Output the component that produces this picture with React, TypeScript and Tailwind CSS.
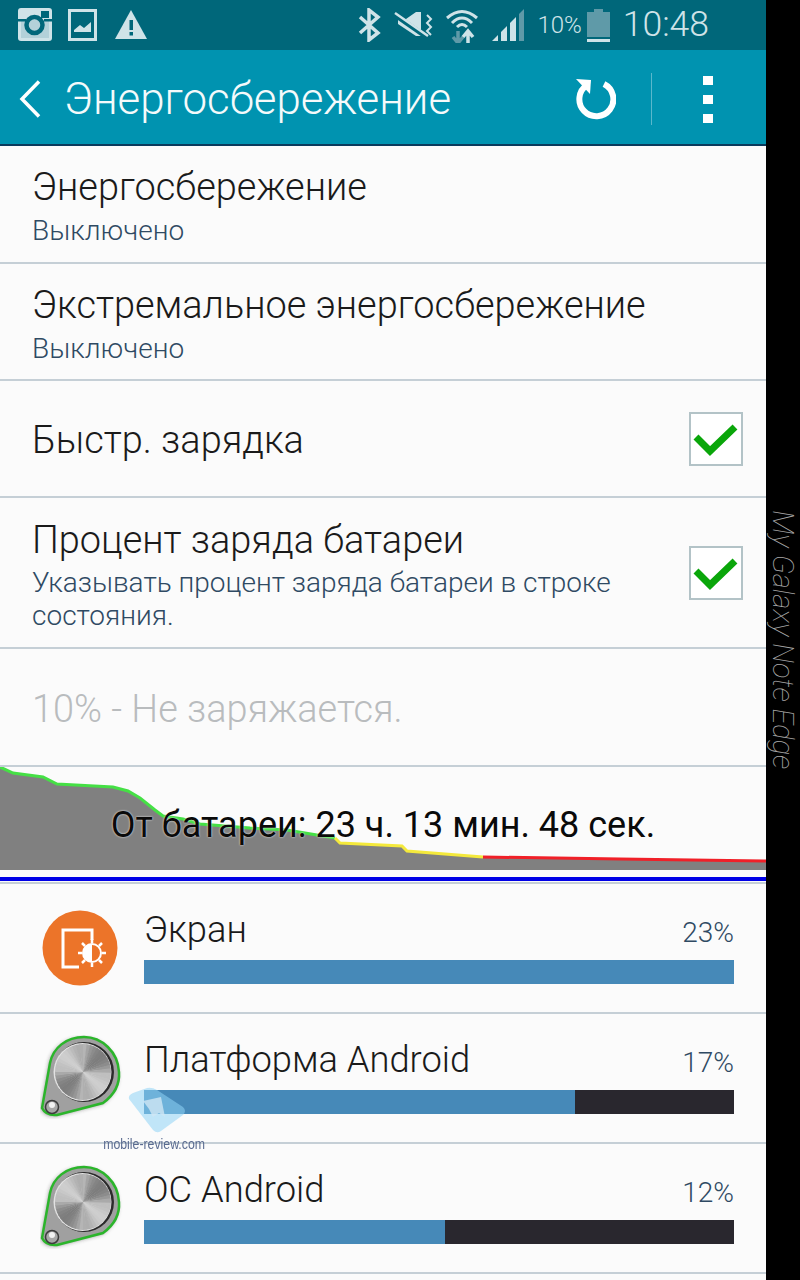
import React from "react";

const font = { fontFamily: "Roboto, sans-serif" };

function StatusBar() {
  const c = "#cfe3e8";
  return (
    <div className="h-[50px] bg-[#00677a] flex items-center relative">
      <svg className="ml-[18px]" width="34" height="34" viewBox="0 0 34 34">
        <rect x="0" y="0" width="34" height="33" rx="3" fill={c} />
        <rect x="3" y="12" width="28" height="18" fill="#7fb0bc" opacity="0.35" />
        <circle cx="16.5" cy="17" r="8" fill="none" stroke="#00677a" strokeWidth="4.5" />
        <rect x="23" y="3" width="8" height="7" fill="#00677a" />
        <rect x="0" y="11" width="8" height="2.5" fill="#00677a" />
        <rect x="26" y="11" width="8" height="2.5" fill="#00677a" />
      </svg>
      <svg className="ml-[16px]" width="29" height="32" viewBox="0 0 29 32">
        <rect x="1.5" y="1.5" width="26" height="29" fill="none" stroke={c} strokeWidth="3" />
        <path d="M6 23 L6 21 L12 16 L16 19 L23 13 L23 23 Z" fill={c} />
      </svg>
      <svg className="ml-[18px]" width="32" height="30" viewBox="0 0 32 30">
        <path d="M16 0 L32 29 L0 29 Z" fill={c} />
        <rect x="14.5" y="10" width="3.5" height="10" fill="#00677a" />
        <rect x="14.5" y="22" width="3.5" height="3.5" fill="#00677a" />
      </svg>
      <div className="ml-auto mr-[57px] flex items-center">
        <svg width="24" height="34" viewBox="0 0 24 34" fill="none" stroke={c} strokeWidth="3.5">
          <path d="M2 9 L20 25 L11 32 L11 2 L20 9 L2 25" />
        </svg>
        <svg className="ml-[9px]" width="44" height="30" viewBox="0 0 44 30">
          <path d="M7 9 L15 9 L25 2 L30 2 L30 26 L25 26 L7 14 Z" fill={c} />
          <path d="M4 5 L37 28" stroke="#00677a" strokeWidth="5" />
          <path d="M4 3 L37 26" stroke={c} strokeWidth="2.5" />
          <path d="M36 5 L40 9 L36 13 L40 17 L36 21 L40 25" stroke={c} strokeWidth="2" fill="none" />
        </svg>
        <svg className="ml-[10px]" width="34" height="36" viewBox="0 0 34 36" fill="none">
          <path d="M2 11 Q17 -2 32 11" stroke={c} strokeWidth="3" />
          <path d="M7 16 Q17 6 27 16" stroke={c} strokeWidth="3" />
          <path d="M12 20 Q17 15 22 20" stroke={c} strokeWidth="3" />
          <path d="M13 24 L13 36 M8 30 L13 36 L18 30" stroke="#5f9aa8" strokeWidth="3.5" />
          <path d="M23 36 L23 24 M18 30 L23 24 L28 30" stroke={c} strokeWidth="3.5" />
        </svg>
        <svg className="ml-[13px]" width="33" height="33" viewBox="0 0 33 33">
          <path d="M0 32 L6 26 L6 32 Z" fill={c} />
          <path d="M9 32 L9 23 L15 17 L15 32 Z" fill={c} />
          <path d="M18 32 L18 14 L24 8 L24 32 Z" fill={c} />
          <path d="M27 32 L27 5 L32 0 L32 32 Z" fill="#5f9aa8" />
        </svg>
        <span className="ml-[12px] text-[24px] leading-none text-[#cfe3e8] font-light" style={font}>10%</span>
        <svg className="ml-[5px]" width="23" height="33" viewBox="0 0 23 33">
          <path d="M7 0 L16 0 L16 3 L23 3 L23 28 L0 28 L0 3 L7 3 Z" fill="#5f9aa8" />
          <rect x="0" y="30" width="23" height="3" fill={c} />
        </svg>
        <span className="ml-[13px] text-[35.5px] leading-none text-[#cfe3e8] font-light" style={font}>10:48</span>
      </div>
    </div>
  );
}

function ActionBar() {
  return (
    <div className="h-[96px] bg-[#0093b0] border-b-2 border-[#0a3a5c] flex items-center text-white pt-[4px]">
      <svg className="ml-[19px]" width="22" height="38" viewBox="0 0 22 38" fill="none" stroke="#fff" strokeWidth="3.5">
        <path d="M20 1.5 L3 19 L20 36.5" />
      </svg>
      <span className="ml-[23px] text-[43.8px] leading-none font-light text-[#f4fafb] pt-[1px]" style={font}>Энергосбережение</span>
      <svg className="ml-[123px]" width="42" height="42" viewBox="0 0 42 42" fill="none">
        <path d="M13 7 A17 17 0 1 0 30 6" stroke="#fff" strokeWidth="6" fill="none" />
        <path d="M2 1 L17 2 L16 16 Z" fill="#fff" />
      </svg>
      <div className="ml-[35px] w-px h-[52px] bg-[#5ab8cc]" />
      <div className="ml-[51px] flex flex-col gap-[10px]">
        <div className="w-[10px] h-[9px] bg-white" />
        <div className="w-[10px] h-[9px] bg-white" />
        <div className="w-[10px] h-[9px] bg-white" />
      </div>
    </div>
  );
}

function Check() {
  return (
    <div className="w-[54px] h-[54px] border-2 border-[#b3c3c7] bg-white flex items-center justify-center shrink-0">
      <svg width="46" height="34" viewBox="0 0 46 34" fill="none" stroke="#0aa60a" strokeWidth="7">
        <path d="M3 15 L17 29 L42 5" />
      </svg>
    </div>
  );
}

function Row({ h, title, sub, check, dim, pt, subMt = "mt-[6px]" }: { h: string; title: string; sub?: React.ReactNode; check?: boolean; dim?: boolean; pt: string; subMt?: string }) {
  return (
    <div className={`${h} border-b-2 border-[#c5cfd6] flex items-center pl-[32px] pr-[23px]`}>
      <div className={`flex-1 min-w-0 self-start ${pt}`}>
        <div className={`text-[37.9px] leading-[40px] font-light ${dim ? "text-[#b9bcbe]" : "text-[#1a1a1a]"}`}>{title}</div>
        {sub && <div className={`text-[28px] leading-[33px] text-[#2f4a63] font-light ${subMt}`}>{sub}</div>}
      </div>
      {check && <Check />}
    </div>
  );
}

function Chart() {
  const green = "0,767 13,773 43,777 57,784 113,787 128,791 140,798 155,810 163,816 183,819 200,824 250,828 287,830 335,838";
  const yellow = "335,838 340,843 402,846 407,851 483,857";
  const red = "483,857 620,859 766,861";
  const area = `${green} 340,843 402,846 407,851 483,857 620,859 766,861 766,870 0,870`;
  return (
    <div className="relative h-[103px] bg-[#fbfbfb]">
      <svg className="absolute inset-0" width="766" height="103" viewBox="0 767 766 103">
        <polygon points={area} fill="#808080" />
        <polyline points={green} fill="none" stroke="#45e045" strokeWidth="3" />
        <polyline points={yellow} fill="none" stroke="#f4e93c" strokeWidth="3" />
        <polyline points={red} fill="none" stroke="#f02028" strokeWidth="3" />
      </svg>
      <div className="absolute left-0 right-0 top-[36px] text-center text-[36px] leading-[44px] text-[#0a0a0a] [text-shadow:0_0_2px_#fff]">
        От батареи: 23 ч. 13 мин. 48 сек.
      </div>
    </div>
  );
}

function Knob({ id }: { id: string }) {
  const wedges = [];
  for (let i = 0; i < 48; i++) {
    const a0 = (i / 48) * Math.PI * 2;
    const a1 = ((i + 1.2) / 48) * Math.PI * 2;
    const v = Math.round(175 + 80 * Math.pow(Math.abs(Math.cos(a0 - 0.7)), 6) - 50 * Math.abs(Math.sin(2 * a0)));
    wedges.push(
      <path
        key={i}
        d={`M43 37 L${43 + 28 * Math.cos(a0)} ${37 + 28 * Math.sin(a0)} L${43 + 28 * Math.cos(a1)} ${37 + 28 * Math.sin(a1)} Z`}
        fill={`rgb(${v},${v},${v})`}
      />
    );
  }
  const tear = "M44 2 C26 2 13 13 10 28 L2 73 Q6 81 17 80 L63 68 C74 60 80 50 79 37 C78 17 62 2 44 2 Z";
  return (
    <svg width="84" height="84" viewBox="0 0 84 84" className="shrink-0">
      <defs>
        <filter id={id + "s"}><feGaussianBlur stdDeviation="2" /></filter>
        <filter id={id + "b"}><feGaussianBlur stdDeviation="0.7" /></filter>
      </defs>
      <path d={tear} fill="#333" opacity="0.55" filter={`url(#${id}s)`} transform="translate(-1 1)" />
      <path d={tear} fill="#a0a0a0" stroke="#2bb52b" strokeWidth="2.5" />
      <circle cx="44" cy="37" r="30" fill="#2c2c2c" filter={`url(#${id}b)`} />
      <circle cx="42.5" cy="37" r="29" fill="#e2e2e2" />
      <g filter={`url(#${id}b)`}>{wedges}</g>
      <circle cx="12" cy="72" r="6.5" fill="#a8a8a8" stroke="#3c3c3c" strokeWidth="1.5" />
      <circle cx="12" cy="70" r="3" fill="#f2f2f2" />
    </svg>
  );
}

function ScreenIcon() {
  return (
    <svg width="76" height="76" viewBox="0 0 76 76" className="shrink-0">
      <circle cx="38" cy="38" r="37.5" fill="#ec7429" />
      <path d="M50 30 L50 20 L21 20 L21 57 L37 57" fill="none" stroke="#fff" strokeWidth="3" />
      <path d="M50 34 A9 9 0 0 0 50 52 Z" fill="#fff" />
      <circle cx="50" cy="43" r="9" fill="none" stroke="#fff" strokeWidth="2" />
      <path d="M50 29 V33 M50 53 V57 M36 43 H40 M60 43 H64 M40 33 L43 36 M60 33 L57 36 M40 53 L43 50 M60 53 L57 50" stroke="#fff" strokeWidth="2.5" />
    </svg>
  );
}

function Item({ name, pct, width, dark, icon, left }: { name: string; pct: string; width: number; dark?: boolean; icon: React.ReactNode; left: string }) {
  return (
    <div className="h-[130px] border-b-2 border-[#c5cfd6] flex pr-[32px]">
      <div className={`w-[144px] shrink-0 ${left}`}>{icon}</div>
      <div className="flex-1 min-w-0 pt-[23px]">
        <div className="flex items-end justify-between h-[44px]">
          <span className="text-[36.3px] leading-[42px] text-[#1a1a1a] font-light">{name}</span>
          <span className="text-[28px] leading-[36px] text-[#2f4a63] font-light">{pct}</span>
        </div>
        <div className={`mt-[9px] h-[24px] ${dark ? "bg-[#29272e]" : "bg-[#4689b8]"}`}>
          <div className="h-full bg-[#4689b8]" style={{ width: `${width}%` }} />
        </div>
      </div>
    </div>
  );
}

export default function App() {
  return (
    <div className="w-[800px] h-[1280px] bg-black relative overflow-hidden" style={font}>
      <div className="w-[766px] h-[1280px] bg-[#fbfbfb] overflow-hidden">
        <StatusBar />
        <ActionBar />
        <Row h="h-[118px]" pt="pt-[21px]" subMt="mt-[7px]" title="Энергосбережение" sub="Выключено" />
        <Row h="h-[117px]" pt="pt-[21px]" subMt="mt-[7px]" title="Экстремальное энергосбережение" sub="Выключено" />
        <Row h="h-[117px]" pt="pt-[39px]" title="Быстр. зарядка" check />
        <Row h="h-[151px]" pt="pt-[22px]" title="Процент заряда батареи" sub={<>Указывать процент заряда батареи в строке<br />состояния.</>} check />
        <Row h="h-[118px]" pt="pt-[40px]" title="10% - Не заряжается." dim />
        <Chart />
        <div className="h-[7px]" />
        <div className="h-[4px] bg-[#0000e6]" />
        <div className="h-[3px] border-b-2 border-[#c5cfd6]" />
        <Item name="Экран" pct="23%" width={100} icon={<ScreenIcon />} left="pl-[42px] pt-[26px]" />
        <Item name="Платформа Android" pct="17%" width={73} dark icon={<Knob id="k1" />} left="pl-[40px] pt-[21px]" />
        <Item name="ОС Android" pct="12%" width={51} dark icon={<Knob id="k2" />} left="pl-[40px] pt-[21px]" />
      </div>
      <div className="absolute left-[766px] top-[510px] w-[34px] h-[260px] flex items-center justify-center">
        <span className="rotate-90 whitespace-nowrap text-[29px] italic font-thin text-[#a8a8a8]" style={font}>My Galaxy Note Edge</span>
      </div>
      <div className="absolute left-[100px] top-[1087px] w-[110px] h-[66px] flex flex-col items-center">
        <svg width="60" height="48" viewBox="0 0 60 48" className="ml-[3px]">
          <path d="M2 12 Q1 8 6 6 L20 1 Q25 0 30 3 L56 20 Q60 24 56 28 L34 44 Q30 47 26 43 Z" fill="#8fd3f5" fillOpacity="0.55" />
          <path d="M16 14 L34 10 L38 30 L32 26 L26 30 L22 22 Z" fill="#cfe6f4" fillOpacity="0.8" />
        </svg>
        <span className="text-[15px] leading-[16px] mt-[1px] text-[#5a6b90] whitespace-nowrap ml-[-1px]" style={{ fontFamily: '"Liberation Sans", sans-serif', transform: "scaleX(0.82)" }}>mobile-review.com</span>
      </div>
    </div>
  );
}
